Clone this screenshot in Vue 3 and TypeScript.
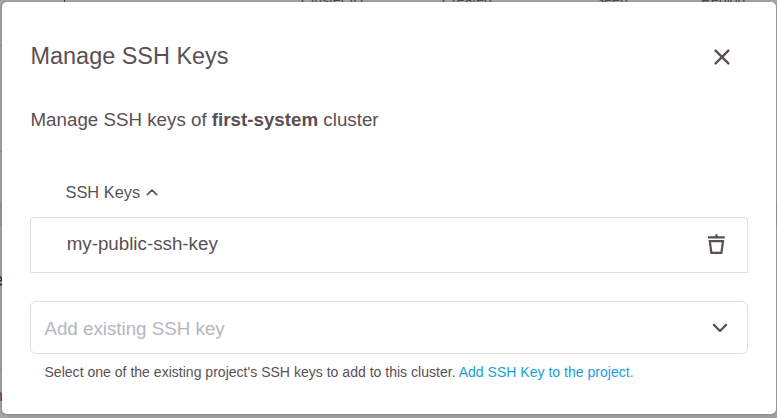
<script setup lang="ts">
import { ref } from 'vue'

const keys = ref<string[]>(['my-public-ssh-key'])

const columns = [
  { label: 'Cluster ID', left: 301 },
  { label: 'Created', left: 442 },
  { label: 'Seen', left: 595 },
  { label: 'Region', left: 701 },
]

const removeKey = (name: string) => {
  keys.value = keys.value.filter((key) => key !== name)
}
</script>

<template>
  <div class="screen">
    <div class="backdrop">
      <span v-for="column in columns" :key="column.label" class="behind heading" :style="{ left: column.left + 'px' }">{{ column.label }}</span>
      <i class="tick"></i>
      <i class="rule rule-a"></i>
      <i class="rule rule-b"></i>
      <i class="rule rule-c"></i>
      <i class="band"></i>
      <span class="behind letter-e">e</span>
      <span class="behind letter-n">n</span>
    </div>
    <section class="dialog">
      <header class="dialog-header">
        <h1>Manage SSH Keys</h1>
        <button class="icon-button" aria-label="Close">
          <svg class="close" width="18" height="18" viewBox="0 0 18 18"><path d="M2.6 2.6 15.4 15.4M15.4 2.6 2.6 15.4" /></svg>
        </button>
      </header>
      <p class="intro">Manage SSH keys of <b>first-system</b> cluster</p>
      <div class="list-heading">
        <span>SSH Keys</span>
        <svg width="12" height="8" viewBox="0 0 12 8"><path d="M1.4 6.6 6 2 10.6 6.6" /></svg>
      </div>
      <ul class="keys">
        <li v-for="key in keys" :key="key">
          <span>{{ key }}</span>
          <button class="icon-button" aria-label="Delete" @click="removeKey(key)">
            <svg class="trash" width="18" height="20" viewBox="0 0 18 20">
              <path d="M1 3.3H17.8M9.4 .2V3.3M2.8 7.1H16L14.4 18.8H4.4Z" />
            </svg>
          </button>
        </li>
      </ul>
      <div class="select" role="combobox" aria-expanded="false">
        <span>Add existing SSH key</span>
        <svg width="16" height="10" viewBox="0 0 16 10"><path d="M1.9 1.9 8 8 14.1 1.9" /></svg>
      </div>
      <p class="hint">Select one of the existing project's SSH keys to add to this cluster. <a>Add SSH Key to the project.</a></p>
    </section>
  </div>
</template>

<style>
body {
  margin: 0;
}
</style>

<style scoped>
.screen {
  position: relative;
  box-sizing: border-box;
  width: 777px;
  height: 418px;
  padding: 2px 1px 4px 2px;
  overflow: hidden;
  background: #a8a8a8;
  color: #5a5054;
  font-family: "Liberation Sans", Arial, sans-serif;
}
.backdrop {
  position: absolute;
  inset: 0;
}
.behind {
  position: absolute;
  color: #514b4e;
  white-space: nowrap;
}
.heading {
  top: -7px;
  font-size: 14px;
  line-height: 14px;
}
.letter-e {
  top: 270px;
  left: -7px;
  font-size: 19px;
  line-height: 20px;
  color: #302c2e;
}
.letter-n {
  top: 387px;
  left: -6px;
  font-size: 16px;
  line-height: 18px;
}
.tick {
  position: absolute;
  left: 64px;
  top: 0;
  width: 1px;
  height: 2px;
  background: #3d3a3b;
}
.rule {
  position: absolute;
  left: 0;
  width: 777px;
  height: 1px;
  background: #969696;
}
.rule-a { top: 45px; }
.rule-b { top: 151px; }
.rule-c { top: 369px; }
.band {
  position: absolute;
  left: 0;
  top: 202px;
  width: 777px;
  height: 24px;
  background: #9c9c9c;
}
.dialog {
  position: relative;
  box-sizing: border-box;
  height: 412px;
  padding: 38px 28px 0;
  border-radius: 5px;
  background: #fff;
  box-shadow: 0 1px 5px rgba(0, 0, 0, 0.25);
}
.dialog-header {
  display: flex;
  align-items: center;
  justify-content: space-between;
  height: 32px;
  padding: 0 17.5px 0 0.5px;
}
h1 {
  margin: 0;
  font-size: 23.44px;
  font-weight: 400;
  line-height: 32px;
}
.icon-button {
  display: flex;
  padding: 0;
  border: 0;
  background: none;
  color: inherit;
}
svg {
  display: block;
  fill: none;
  stroke: currentColor;
  stroke-width: 2;
  stroke-linecap: round;
  stroke-linejoin: round;
}
.close {
  margin-top: 2px;
  stroke-width: 2.4;
}
.intro {
  margin: 34px 0 0;
  padding-left: 0.5px;
  font-size: 18.75px;
  line-height: 28px;
}
.list-heading {
  display: flex;
  align-items: center;
  gap: 5.5px;
  margin-top: 46px;
  padding-left: 35.5px;
  font-size: 16.4px;
  line-height: 24px;
}
.list-heading svg {
  stroke-width: 1.6;
}
.keys {
  box-sizing: border-box;
  margin: 13px 0 0;
  padding: 0;
  border: 1px solid #dedfe1;
  border-radius: 4px 4px 0 0;
  list-style: none;
}
.keys li {
  display: flex;
  align-items: center;
  justify-content: space-between;
  box-sizing: border-box;
  height: 54px;
  padding: 0 22px 2px 35.7px;
  font-size: 18.75px;
}
.trash {
  stroke-linecap: butt;
  stroke-linejoin: miter;
  stroke-width: 2.2;
}
.select {
  display: flex;
  align-items: center;
  justify-content: space-between;
  box-sizing: border-box;
  height: 53px;
  margin-top: 28px;
  padding: 0 19px 0 13.4px;
  border: 1px solid #dedfe1;
  border-radius: 6px;
  font-size: 18.75px;
}
.select span {
  padding-top: 2px;
  color: #b4b7be;
}
.select svg {
  stroke-width: 2.2;
}
.hint {
  margin: 8px 0 0;
  padding-left: 14.5px;
  font-size: 14.06px;
  line-height: 20px;
}
a {
  color: #169fdb;
}
</style>
